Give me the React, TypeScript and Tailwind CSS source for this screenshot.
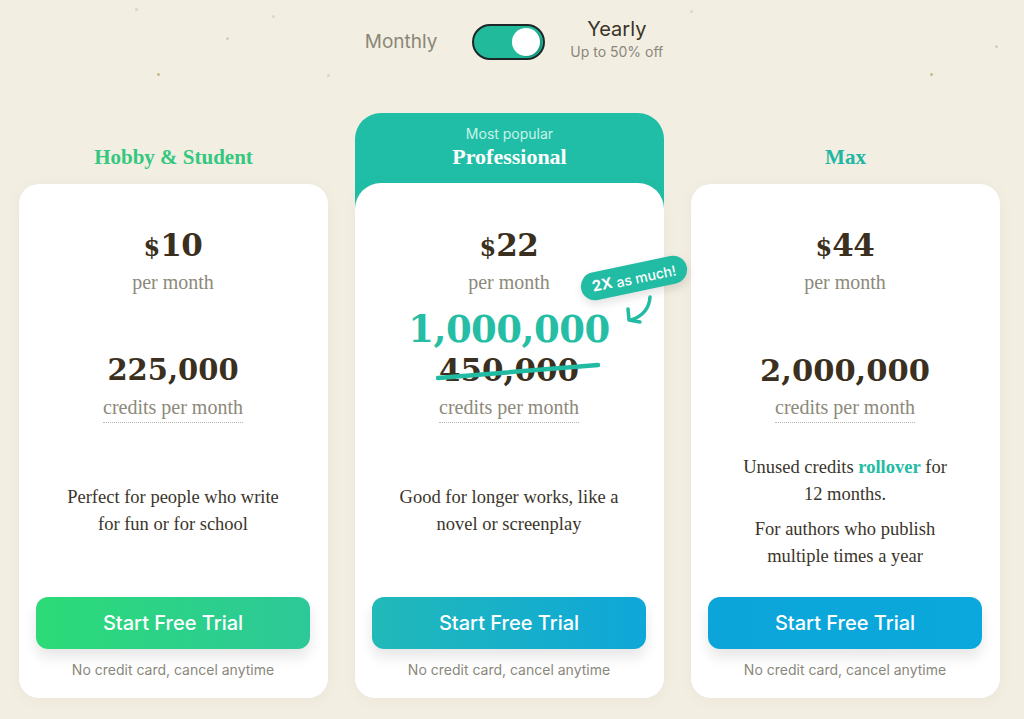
import React from "react";

const serif = { fontFamily: '"Liberation Serif", serif' };
const numSerif = { fontFamily: '"DejaVu Serif", serif' };
const sans = { fontFamily: 'Inter, "Liberation Sans", sans-serif' };

function Price({ amount }: { amount: string }) {
  return (
    <div className="flex flex-col items-center">
      <div className="flex items-baseline justify-center h-[40px] leading-[40px] text-[#3b3020] font-bold" style={numSerif}>
        <span className="text-[24px]">$</span>
        <span className="text-[31px] tracking-[-0.5px]">{amount}</span>
      </div>
      <div className="mt-[3px] text-[20px] leading-[28px] text-[#8d897b]" style={serif}>per month</div>
    </div>
  );
}

function Credits() {
  return (
    <div className="mt-[7px] flex justify-center">
      <span className="text-[20px] leading-[26px] pb-[2px] text-[#8d897b] border-b border-dotted border-[#b9b6aa]" style={serif}>
        credits per month
      </span>
    </div>
  );
}

function Footer({ gradient }: { gradient: string }) {
  return (
    <div className="flex flex-col items-center">
      <button
        className={`w-full h-[52px] rounded-[12px] text-white text-[20px] font-medium shadow-[0_8px_14px_rgba(0,0,0,0.10)] ${gradient}`}
        style={sans}
      >
        Start Free Trial
      </button>
      <div className="mt-[11px] text-[14px] leading-[20px] text-[#8a877d]" style={sans}>
        No credit card, cancel anytime
      </div>
    </div>
  );
}

function Dots() {
  const dots = [
    [157, 73, "#c9b98a"], [226, 37, "#d7cfb8"], [272, 15, "#ddd6c0"], [930, 73, "#c9b98a"],
    [995, 45, "#d7cfb8"], [690, 10, "#ddd6c0"], [135, 8, "#ddd6c0"], [327, 74, "#ddd6c0"],
  ] as const;
  return (
    <>
      {dots.map(([x, y, c], i) => (
        <span key={i} className="absolute w-[3px] h-[3px] rounded-full" style={{ left: x, top: y, background: c }} />
      ))}
    </>
  );
}

export default function App() {
  return (
    <div className="relative w-[1024px] h-[719px] overflow-hidden bg-[#f2eee1]">
      <Dots />
      {/* Toggle */}
      <div className="relative flex justify-center items-center pt-[23px] pl-[4px]">
        <span className="text-[19px] text-[#8a8777] mr-[35px]" style={sans}>Monthly</span>
        <div className="w-[73px] h-[36px] rounded-full border-2 border-[#1d2727] bg-[#21bb9c] flex items-center justify-end pr-[3px]">
          <div className="w-[28px] h-[28px] rounded-full bg-white shadow-[2px_1px_0_#179a80]" />
        </div>
        <div className="ml-[25px] flex flex-col items-center -mt-[6px]">
          <span className="text-[20px] leading-[24px] text-[#3b3326]" style={sans}>Yearly</span>
          <span className="text-[14px] leading-[18px] text-[#8a877d] mt-[2px]" style={sans}>Up to 50% off</span>
        </div>
      </div>

      {/* Columns */}
      <div className="relative flex gap-[27px] pl-[19px] mt-[52px]">
        {/* Hobby */}
        <div className="w-[309px] flex flex-col">
          <div className="h-[71px] pt-[30px] text-center text-[21px] leading-[28px] font-bold text-[#33c780]" style={serif}>
            Hobby &amp; Student
          </div>
          <div className="h-[514px] bg-white rounded-[20px] shadow-[0_2px_14px_rgba(120,110,80,0.06)] flex flex-col pt-[41px] pl-[17px] pr-[18px] pb-[18px]">
            <Price amount="10" />
            <div className="h-[91px] flex flex-col justify-end items-center">
              <div className="text-[29px] leading-[34px] font-bold text-[#3b3020]" style={numSerif}>225,000</div>
            </div>
            <Credits />
            <div className="flex-1 flex items-center justify-center pt-[2px]">
              <p className="text-center text-[18.5px] leading-[27px] text-[#3a352b]" style={serif}>
                Perfect for people who write<br />for fun or for school
              </p>
            </div>
            <Footer gradient="bg-gradient-to-r from-[#2cdb76] to-[#2dc898]" />
          </div>
        </div>

        {/* Professional */}
        <div className="w-[309px] flex flex-col">
          <div className="bg-[#20bea6] rounded-t-[26px] rounded-b-[30px] flex flex-col">
            <div className="h-[70px] pt-[12px] flex flex-col items-center">
              <span className="text-[14px] leading-[18px] text-[#c9f2ea]" style={sans}>Most popular</span>
              <span className="text-[22px] leading-[28px] font-bold text-white" style={serif}>Professional</span>
            </div>
            <div className="relative h-[515px] bg-white rounded-[26px] rounded-b-[20px] shadow-[0_2px_14px_rgba(120,110,80,0.06)] flex flex-col pt-[42px] pl-[17px] pr-[18px] pb-[18px]">
              <Price amount="22" />
              <div className="h-[91px] flex flex-col justify-end items-center gap-[3px]">
                <div className="text-[37px] leading-[42px] font-bold text-[#25bea5] tracking-[-0.5px]" style={numSerif}>1,000,000</div>
                <div className="relative text-[31px] leading-[34px] font-bold text-[#3b3020]" style={numSerif}>
                  450,000
                  <svg className="absolute left-[-3px] top-0" width="168" height="34" viewBox="0 0 168 34">
                    <path d="M2 25 Q 80 19 162 12" stroke="#21bba3" strokeWidth="4.5" strokeLinecap="round" fill="none" />
                  </svg>
                </div>
              </div>
              <Credits />
              <div className="flex-1 flex items-center justify-center pt-[2px]">
                <p className="text-center text-[18.5px] leading-[27px] text-[#3a352b]" style={serif}>
                  Good for longer works, like a<br />novel or screenplay
                </p>
              </div>
              <Footer gradient="bg-gradient-to-r from-[#22b9b8] to-[#0fa6d9]" />

              {/* badge */}
              <div
                className="absolute left-[225px] top-[81px] w-[108px] h-[28px] rounded-full bg-[#22bba3] text-white flex items-center justify-center gap-[4px] -rotate-[12deg] shadow-[0_4px_10px_rgba(0,0,0,0.12)]"
                style={sans}
              >
                <span className="text-[15px] font-bold">2X</span>
                <span className="text-[14px] font-medium">as much!</span>
              </div>
              <svg className="absolute left-[265px] top-[109px]" width="40" height="36" viewBox="0 0 40 36">
                <path d="M30 5 Q 29 22 11 28" stroke="#22bba3" strokeWidth="3.5" strokeLinecap="round" fill="none" />
                <path d="M8 17 L 9 28 L 20 30" stroke="#22bba3" strokeWidth="3.5" strokeLinecap="round" strokeLinejoin="round" fill="none" />
              </svg>
            </div>
          </div>
        </div>

        {/* Max */}
        <div className="w-[309px] flex flex-col">
          <div className="h-[71px] pt-[30px] text-center text-[21px] leading-[28px] font-bold text-[#20b6a4]" style={serif}>
            Max
          </div>
          <div className="h-[514px] bg-white rounded-[20px] shadow-[0_2px_14px_rgba(120,110,80,0.06)] flex flex-col pt-[41px] pl-[17px] pr-[18px] pb-[18px]">
            <Price amount="44" />
            <div className="h-[91px] flex flex-col justify-end items-center">
              <div className="text-[30.5px] leading-[34px] font-bold text-[#3b3020]" style={numSerif}>2,000,000</div>
            </div>
            <Credits />
            <div className="flex-1 flex flex-col items-center justify-center gap-[8px] pt-[4px]">
              <p className="text-center text-[18.5px] leading-[27px] text-[#3a352b]" style={serif}>
                Unused credits <span className="font-bold text-[#22bba3]">rollover</span> for<br />12 months.
              </p>
              <p className="text-center text-[18.5px] leading-[27px] text-[#3a352b]" style={serif}>
                For authors who publish<br />multiple times a year
              </p>
            </div>
            <Footer gradient="bg-gradient-to-r from-[#0ca5d9] to-[#0aa8dc]" />
          </div>
        </div>
      </div>
    </div>
  );
}
